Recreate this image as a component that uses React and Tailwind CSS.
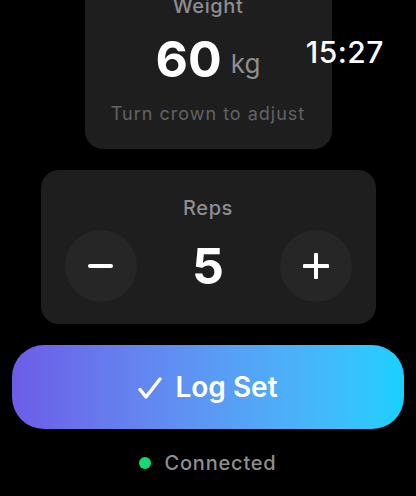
import React from "react";

const font = { fontFamily: "Inter, 'Noto Sans', sans-serif" };

const Stepper = ({ children }) => (
  <button className="w-[72px] h-[72px] rounded-full bg-[#262626] flex items-center justify-center">
    {children}
  </button>
);

const App = () => {
  return (
    <div
      className="relative w-[416px] h-[496px] overflow-hidden bg-black text-white flex flex-col items-center"
      style={font}
    >
      {/* clock */}
      <div className="absolute top-[37px] right-[32px] text-[30px] leading-none font-medium tracking-[0.5px]">
        15:27
      </div>

      {/* weight card */}
      <div className="-mt-[22px] w-[247px] rounded-[18px] bg-[#1e1e1e] flex flex-col items-center pt-[16px] pb-[24px]">
        <div className="text-[20px] leading-[24px] font-medium text-[#8e8e93] tracking-[0.6px]">
          Weight
        </div>
        <div className="mt-[16px] flex items-baseline gap-[9px]">
          <span className="text-[50px] leading-none font-bold">60</span>
          <span className="text-[26px] leading-none text-[#8e8e93] -translate-y-[4px]">kg</span>
        </div>
        <div className="mt-[19px] text-[18px] leading-[22px] text-[#636366] tracking-[1px]">
          Turn crown to adjust
        </div>
      </div>

      {/* reps card */}
      <div className="mt-[21px] w-[335px] h-[154px] rounded-[18px] bg-[#1e1e1e] flex flex-col items-center pt-[26px] px-6">
        <div className="text-[20px] leading-[24px] font-medium text-[#8e8e93] tracking-[0.6px]">
          Reps
        </div>
        <div className="mt-[10px] w-full flex items-center justify-between">
          <Stepper>
            <div className="w-[25px] h-[4px] rounded-full bg-white" />
          </Stepper>
          <span className="text-[50px] leading-none font-bold">5</span>
          <Stepper>
            <svg width="26" height="26" viewBox="0 0 26 26">
              <path d="M13 1.5v23M1.5 13h23" stroke="white" strokeWidth="4" strokeLinecap="round" />
            </svg>
          </Stepper>
        </div>
      </div>

      {/* log set */}
      <button className="mt-[21px] w-[392px] h-[84px] rounded-[32px] bg-gradient-to-r from-[#6c5ce7] to-[#16d0ff] flex items-center justify-center gap-[13px]">
        <svg width="24" height="22" viewBox="0 0 24 22" className="mt-[1px]">
          <path d="M2 12.5l6 7.5L22 2" fill="none" stroke="white" strokeWidth="3.4" strokeLinecap="round" strokeLinejoin="round" />
        </svg>
        <span className="text-[28px] leading-none font-semibold">Log Set</span>
      </button>

      {/* status */}
      <div className="mt-[24px] flex items-center gap-[13px]">
        <span className="w-[12px] h-[12px] rounded-full bg-[#10dc73]" />
        <span className="text-[20px] leading-none font-medium text-[#8e8e93] tracking-[0.8px]">
          Connected
        </span>
      </div>
    </div>
  );
};

export default App;
